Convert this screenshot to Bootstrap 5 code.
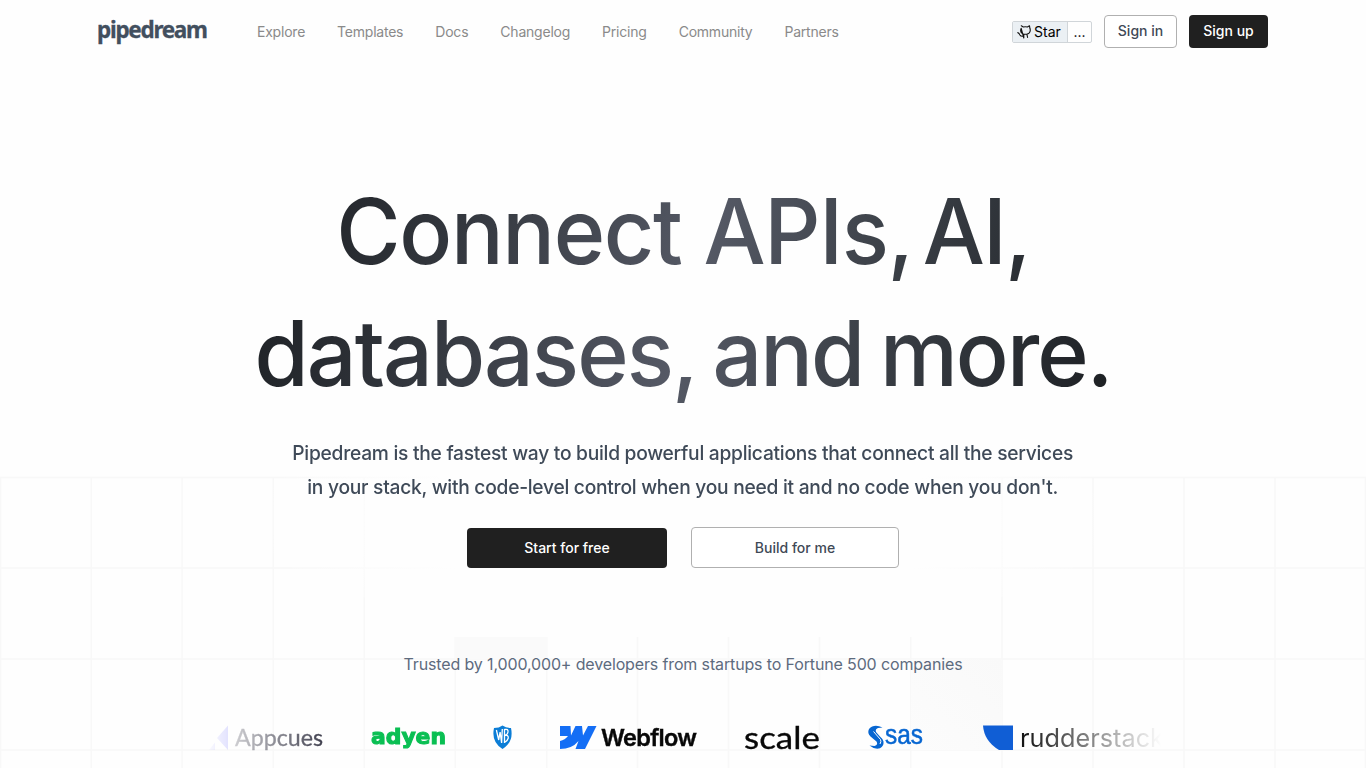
<!DOCTYPE html>
<html lang="en">
<head>
<meta charset="utf-8">
<meta name="viewport" content="width=device-width, initial-scale=1">
<title>Pipedream</title>
<link href="https://cdn.jsdelivr.net/npm/bootstrap@5.3.0/dist/css/bootstrap.min.css" rel="stylesheet">
<style>
body{font-family:Inter,"Liberation Sans",sans-serif;background:#fefefe;height:768px;overflow:hidden}
.backdrop{position:absolute;left:0;top:0;z-index:-1}
.site-header{height:64px;padding:0 98px 0 97px}
.wordmark{overflow:visible}
.site-nav{gap:32px;margin-left:46px;font-size:14px;letter-spacing:-.22px}
.site-nav a{color:#8a8a8a;text-decoration:none;line-height:20px}
.gh{height:22px;font-size:14px;color:#000;border:1px solid #d0d5d9;border-radius:2px;line-height:20px}
.gh-star{background:#ebf0f4;width:55px;border-right:1px solid #d0d5d9;gap:3px;padding-left:4px}
.gh-count{width:23px}
.btn{font-weight:500;font-size:14px;border-radius:4px;letter-spacing:0;padding:0}
.btn-line{border:1px solid #b0b0b0;color:#3f4956;background:#fff}
.btn-ink{background:#202020;color:#fff;border:0}
.btn-nav{height:33px;margin:0 0 2px 12px}
.btn-nav.btn-line{line-height:30px}
.btn-nav.btn-ink{line-height:32px}
.hero-title{margin:106px 0 0;font-size:91.3px;line-height:122px;font-weight:500;letter-spacing:-2px;word-spacing:-5px;width:900px;background:linear-gradient(106deg,#1d2024 2%,#33373e 24%,#555965 51%,#3a3f46 72%,#1e2125 98%);-webkit-background-clip:text;background-clip:text;color:transparent;white-space:nowrap;transform:scaleX(.96)}
.hero-title .wide{word-spacing:0;letter-spacing:-1.4px}
.hero-title .tight{word-spacing:-12px}
.hero-copy{margin:22px 0 0;font-size:20px;line-height:34px;font-weight:500;letter-spacing:-.27px;color:#3f4a58;white-space:nowrap;transform:scaleX(.96)}
.cta{margin-top:23px;gap:24px}
.cta .btn{height:41px;line-height:39px}
.cta .btn-ink{height:40px;line-height:40px;margin-top:1px}
.trusted{margin:84px 0 0;font-size:16px;line-height:24px;letter-spacing:-.14px;color:#5d6b7e;white-space:nowrap}
.logo-strip{width:956px;height:40px;margin-top:44px;padding-left:6px;gap:48px;overflow:hidden;-webkit-mask-image:linear-gradient(90deg,transparent 0,#000 137px,#000 819px,transparent 100%);mask-image:linear-gradient(90deg,transparent 0,#000 137px,#000 819px,transparent 100%)}
.logo-strip svg{flex:none;height:40px;overflow:visible}
</style>
</head>
<body>
<svg class="backdrop" width="1366" height="768" aria-hidden="true">
  <defs>
    <radialGradient id="veil" gradientUnits="userSpaceOnUse" cx="0" cy="0" r="1" gradientTransform="translate(683 520) scale(430 170)">
      <stop offset=".6" stop-color="#fefefe"/><stop offset="1" stop-color="#fefefe" stop-opacity="0"/>
    </radialGradient>
    <linearGradient id="sq" x1="0" y1="1" x2="1" y2="0"><stop offset="0" stop-color="#fcfcfc"/><stop offset="1" stop-color="#f9f9f9"/></linearGradient>
  </defs>
  <g fill="none" stroke="#f8f8f8" stroke-width="1.5">
    <path d="M.5 477V768M91.300 477V768M182.100 477V768M273.200 477V768M364.300 477V768M455.300 637V768M546.700 637V768M637.500 637V768M728.500 637V768M819.500 637V768M910.700 637V768M1002 477V768M1093 477V768M1184 477V768M1275 477V768M1365.500 477V768"/>
    <path d="M0 477.500H1366M0 568H1366M0 659H1366M0 750H1366"/>
  </g>
  <rect x="455" y="637" width="92" height="22" fill="#fafafa"/>
  <rect x="911" y="659" width="91" height="91" fill="url(#sq)"/>
  <ellipse cx="683" cy="520" rx="430" ry="115" fill="url(#veil)"/>
</svg>

<header class="site-header d-flex align-items-center">
  <svg class="wordmark" width="114" height="40" role="img" aria-label="pipedream"><text x="0" y="25.500" font-family="Noto Sans" font-weight="700" font-size="22.500" fill="#424f5e" stroke="#424f5e" stroke-width=".3" textLength="111" lengthAdjust="spacing">pipedream</text></svg>
  <nav class="site-nav d-flex">
    <a href="#">Explore</a><a href="#">Templates</a><a href="#">Docs</a><a href="#">Changelog</a><a href="#">Pricing</a><a href="#">Community</a><a href="#">Partners</a>
  </nav>
  <div class="d-flex align-items-center ms-auto">
    <div class="gh d-flex">
      <div class="gh-star d-flex align-items-center">
        <svg width="14" height="14" viewBox="0 0 14 14" fill="none" stroke="#111" stroke-width="1.100" stroke-linejoin="round" stroke-linecap="round"><path d="M4.300.8 6.300 2Q8.400 1.600 10.400 2L12.500.8 12.900 3.300Q14 6.300 12 8.200L9.900 9.200 10.600 12.500M6.800 13V9.200Q3.900 8.400 3.700 6 3.500 4.600 4.200 3.300ZM6.800 9.200H9.900M6.500 11.200Q3.800 11.700 2.900 9.900 2.200 8 .8 7.600"/></svg>
        <span>Star</span>
      </div>
      <div class="gh-count text-center">...</div>
    </div>
    <a class="btn btn-line btn-nav" href="#" style="width:73px">Sign in</a>
    <a class="btn btn-ink btn-nav" href="#" style="width:79px">Sign up</a>
  </div>
</header>

<main class="d-flex flex-column align-items-center text-center">
  <h1 class="hero-title"><span class="wide">Connect APIs,</span><span class="tight"> AI,</span><br>databases, and more.</h1>
  <p class="hero-copy">Pipedream is the fastest way to build powerful applications that connect all the services<br>in your stack, with code-level control when you need it and no code when you don't.</p>
  <div class="cta d-flex">
    <a class="btn btn-ink" href="#" style="width:200px">Start for free</a>
    <a class="btn btn-line" href="#" style="width:208px">Build for me</a>
  </div>
  <p class="trusted">Trusted by 1,000,000+ developers from startups to Fortune 500 companies</p>
  <div class="logo-strip d-flex">
    <svg width="112" role="img" aria-label="Appcues"><path d="M17 5.500V30L6 18ZM4 22.500V30H-2Z" fill="#5c5cff"/><text x="24" y="26" font-family="Lato" font-size="22.500" fill="#223" stroke="#223" stroke-width=".3" textLength="88" lengthAdjust="spacingAndGlyphs">Appcues</text></svg>
    <svg width="74" role="img" aria-label="adyen"><text x="0" y="24" font-family="DejaVu Sans" font-weight="700" font-size="22" fill="#0abf53" stroke="#0abf53" stroke-width="1.100" textLength="75" lengthAdjust="spacingAndGlyphs">adyen</text></svg>
    <svg width="19" role="img" aria-label="WB"><path d="M1 8Q6 8 9.500 5.500 13 8 18 8 21 22 9.500 29-2 22 1 8Z" fill="#0b7dd6"/><path d="M3.400 10 5.700 20 7.100 12 8.600 23 9.300 9M11.500 9V23M11.500 9.500Q15.500 8.500 15 12 14.500 15 11.500 15.500 15.500 14.500 15.300 18 14.500 21 11.500 22.500" fill="none" stroke="#fff" stroke-width="1.300"/></svg>
    <svg width="137" role="img" aria-label="Webflow"><path d="M0 6H10.500L11 15.500 15.500 6H22L23 15.500 28 6H36.500L25 29H15.500L18.500 21Q12 29 0 29V21Q5 20 8 16H0Z" fill="#146ef5"/><text x="41" y="26" font-family="Inter" font-weight="600" font-size="23.500" fill="#080808" stroke="#080808" stroke-width=".4" textLength="96" lengthAdjust="spacing">Webflow</text></svg>
    <svg width="75" role="img" aria-label="scale"><text x="-1" y="29" font-family="Lato" font-size="31" fill="#080808" stroke="#080808" stroke-width=".3" textLength="76" lengthAdjust="spacingAndGlyphs">scale</text></svg>
    <svg width="57" role="img" aria-label="sas"><path d="M14.500 7.500Q6 3.500 1 9-1 13 2.500 16.500L8.500 21.500Q10.500 24.500 6.500 26L1.500 25.500Q7 30 12 28.300 16 26 15.500 21.500 15 19 11.500 16L8 12Q7 9 10 8Z" fill="#0766d1"/><path d="M5.500 11.500 12.500 19.500Q13.500 21.500 12 24" fill="none" stroke="#fefefe" stroke-width="1"/><text x="17" y="24" font-family="Liberation Sans" font-size="28" fill="#0766d1" stroke="#0766d1" stroke-width=".5" textLength="38" lengthAdjust="spacingAndGlyphs">sas</text></svg>
    <svg class="ms-2" width="190" role="img" aria-label="rudderstack"><path d="M2 5.500H32V30H18Q3 21 2 5.500Z" fill="#105ed5"/><text x="39" y="26.500" font-family="Inter" font-size="25" fill="#151515" textLength="144" lengthAdjust="spacingAndGlyphs">rudderstack</text></svg>
  </div>
</main>
<script src="https://cdn.jsdelivr.net/npm/bootstrap@5.3.0/dist/js/bootstrap.bundle.min.js"></script>
</body>
</html>
